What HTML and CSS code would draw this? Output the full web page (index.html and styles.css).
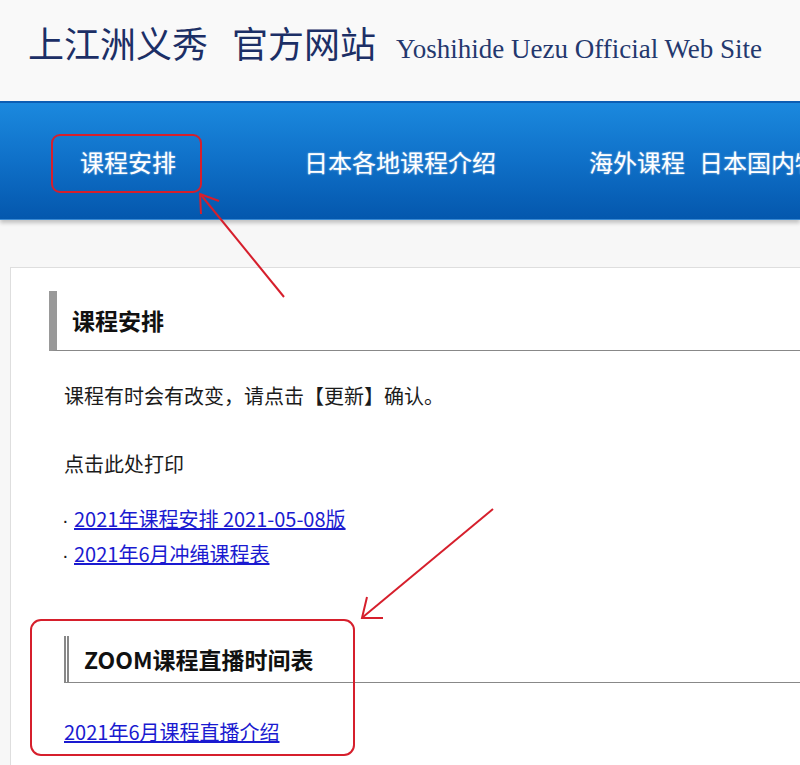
FILE: index.html
```html
<html lang="zh">
<head>
    <meta charset="UTF-8">
    <meta name="viewport" content="width=device-width, initial-scale=1">
    <title>上江洲义秀 官方网站</title>
    <link rel="stylesheet" href="styles.css">
</head>
<body>

	<header class="site_head">
		<span class="site_title">上江洲义秀</span>
		<span class="site_title">官方网站</span>
		<span class="site_sub">Yoshihide Uezu Official Web Site</span>
	</header>

	<nav class="top_nav">
		<a href="" class="nav_item nav_first">课程安排</a>
		<a href="" class="nav_item nav_second">日本各地课程介绍</a>
		<a href="" class="nav_item nav_third">海外课程</a>
		<a href="" class="nav_item nav_fourth">日本国内物产介绍</a>
	</nav>

	<div class="main_block">
		<div class="content">
			<h2 class="head_bar">课程安排</h2>
			<p class="note">课程有时会有改变，请点击【更新】确认。</p>
			<p class="print">点击此处打印</p>
			<ul class="links">
				<li><span class="dot">·</span><a href="">2021年课程安排 2021-05-08版</a></li>
				<li><span class="dot">·</span><a href="">2021年6月冲绳课程表</a></li>
			</ul>

			<h2 class="head_double">ZOOM课程直播时间表</h2>
			<p class="zoom_link"><a href="">2021年6月课程直播介绍</a></p>
		</div>
	</div>

	<svg class="marks" width="800" height="765" viewBox="0 0 800 765">
		<rect x="52" y="135" width="149" height="57" rx="8" />
		<line x1="284" y1="297" x2="201" y2="195" />
		<polyline points="201,214 200,194 219,201" />
		<rect x="31" y="620" width="323" height="135" rx="10" />
		<line x1="493" y1="509" x2="363" y2="617" />
		<polyline points="367,597 362,618 383,618" />
	</svg>

</body>
</html>
```

FILE: styles.css
```css
	*{
		margin: 0;
		padding: 0;
		box-sizing: border-box;
	}
    body {
        font-family: "Noto Sans CJK SC", "Liberation Sans", sans-serif;
        font-size: 20px;
        background-color: #f7f7f7;
        color: #1b1b1b;
        overflow: hidden;
        position: relative;
        width: 800px;
    }
    .site_head {
    	display: flex;
    	align-items: baseline;
    	height: 101px;
    	padding-left: 28px;
    	padding-top: 16px;
    	background-color: #f9f9f9;
    	white-space: nowrap;
    	color: #1c2f66;
    }
    .site_title {
    	font-size: 36px;
    	line-height: 52px;
    	margin-right: 24px;
    }
    .site_title + .site_title {
    	margin-right: 20px;
    }
    .site_sub {
    	font-family: "Liberation Serif", serif;
    	font-size: 27px;
    	color: #24386e;
    }

    .top_nav {
    	display: flex;
    	align-items: center;
    	height: 119px;
    	width: 100%;
    	white-space: nowrap;
    	overflow: hidden;
    	border-top: 2px solid #0b5db3;
    	border-bottom: 1px solid #3a8ad4;
    	background: linear-gradient(#1b89de, #0f70c8 50%, #0457ad);
    	box-shadow: 0 3px 4px rgba(0, 0, 0, 0.22);
    }
    .nav_item {
    	color: #fff;
    	font-size: 24px;
    	text-decoration: none;
    	text-shadow: 0 0 2px rgba(255, 255, 255, 0.6);
    	flex-shrink: 0;
    }
    .nav_first { margin-left: 80px; }
    .nav_second { margin-left: 128px; }
    .nav_third { margin-left: 93px; }
    .nav_fourth { margin-left: 14px; }

    .main_block {
    	padding-top: 47px;
    	padding-left: 10px;
    	margin-right: -40px;
    }
    .content {
    	background-color: #fff;
    	border: 1px solid #dedede;
    	padding: 23px 0 40px 53px;
    	min-height: 520px;
    }
    .head_bar {
    	margin-left: -15px;
    	height: 60px;
    	padding-left: 15px;
    	border-left: 8px solid #999;
    	border-bottom: 1px solid #888;
    	font-size: 23px;
    	font-weight: bold;
    	line-height: 59px;
    	color: #111;
    }
    .note {
    	margin-top: 28px;
    	line-height: 33px;
    }
    .print {
    	margin-top: 35px;
    	line-height: 33px;
    }
    .links {
    	margin-top: 22px;
    	list-style: none;
    }
    .links > li {
    	line-height: 33px;
    	margin-left: -2px;
    }
    .dot {
    	font-family: "Liberation Sans", sans-serif;
    	display: inline-block;
    	width: 12px;
    }
    a {
    	color: #1a1ad0;
    }
    .head_double {
    	margin-top: 64px;
    	height: 47px;
    	padding-left: 15px;
    	border-left: 5px double #888;
    	border-bottom: 1px solid #888;
    	font-size: 23px;
    	font-weight: bold;
    	line-height: 46px;
    	color: #111;
    }
    .zoom_link {
    	margin-top: 32px;
    	line-height: 33px;
    }

    .marks {
    	position: absolute;
    	top: 0;
    	left: 0;
    	pointer-events: none;
    	fill: none;
    	stroke: #d61f2c;
    	stroke-width: 2;
    }
```
